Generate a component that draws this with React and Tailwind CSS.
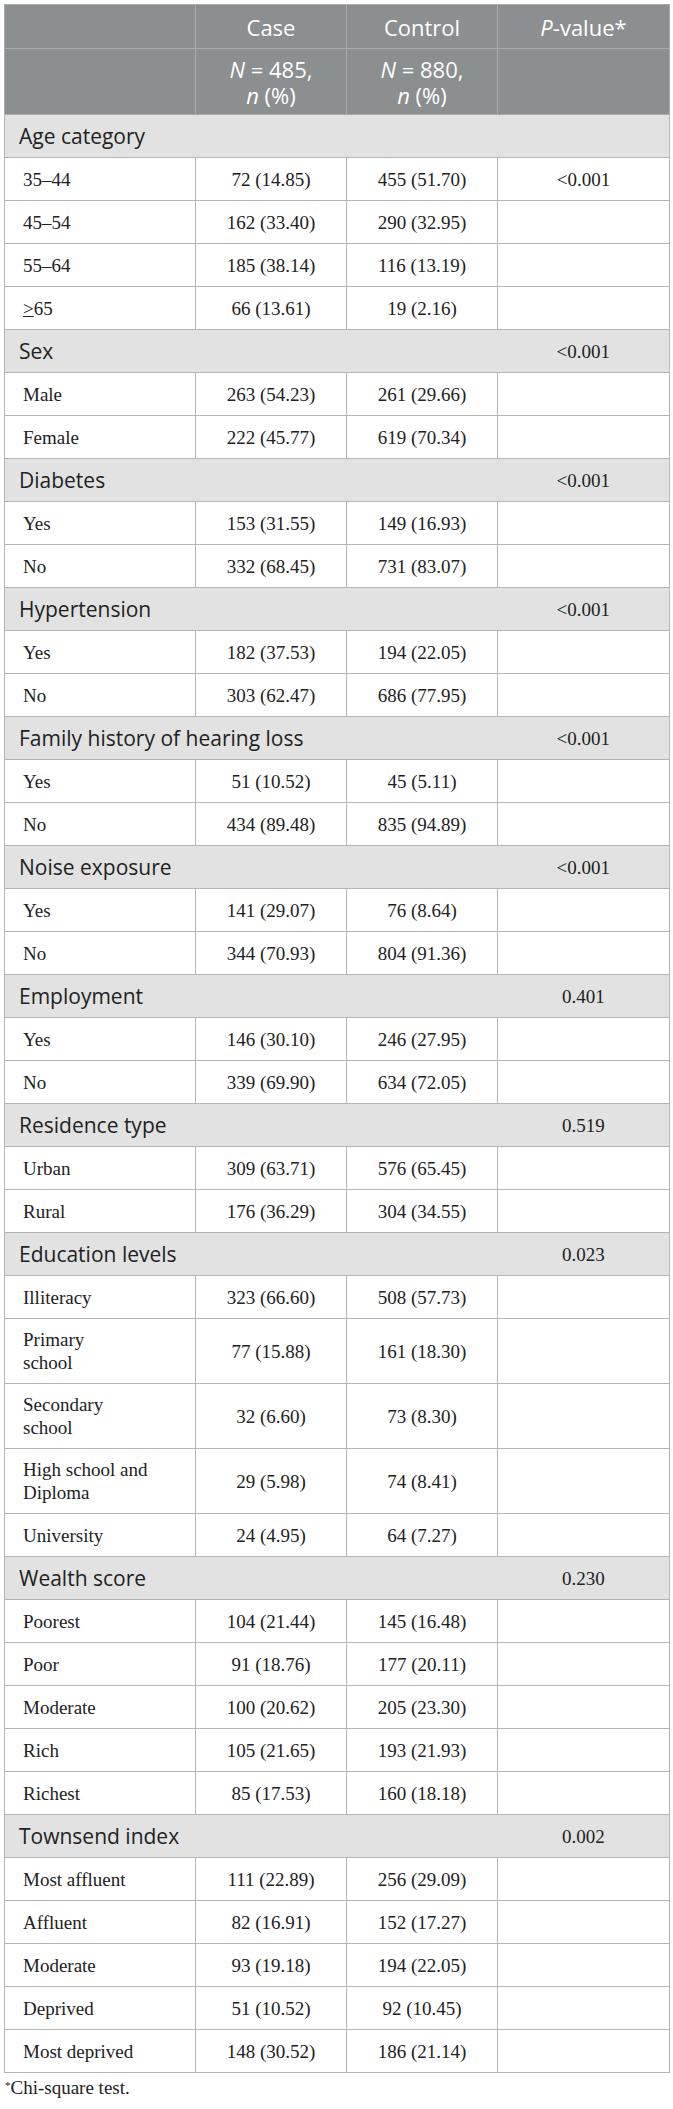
import React from 'react';

const SECTIONS = [
  {
    title: 'Age category',
    rows: [
      ['35–44', '72 (14.85)', '455 (51.70)', '<0.001'],
      ['45–54', '162 (33.40)', '290 (32.95)'],
      ['55–64', '185 (38.14)', '116 (13.19)'],
      [<><span className="underline">&gt;</span>65</>, '66 (13.61)', '19 (2.16)'],
    ],
  },
  { title: 'Sex', p: '<0.001', rows: [['Male', '263 (54.23)', '261 (29.66)'], ['Female', '222 (45.77)', '619 (70.34)']] },
  { title: 'Diabetes', p: '<0.001', rows: [['Yes', '153 (31.55)', '149 (16.93)'], ['No', '332 (68.45)', '731 (83.07)']] },
  { title: 'Hypertension', p: '<0.001', rows: [['Yes', '182 (37.53)', '194 (22.05)'], ['No', '303 (62.47)', '686 (77.95)']] },
  { title: 'Family history of hearing loss', p: '<0.001', rows: [['Yes', '51 (10.52)', '45 (5.11)'], ['No', '434 (89.48)', '835 (94.89)']] },
  { title: 'Noise exposure', p: '<0.001', rows: [['Yes', '141 (29.07)', '76 (8.64)'], ['No', '344 (70.93)', '804 (91.36)']] },
  { title: 'Employment', p: '0.401', rows: [['Yes', '146 (30.10)', '246 (27.95)'], ['No', '339 (69.90)', '634 (72.05)']] },
  { title: 'Residence type', p: '0.519', rows: [['Urban', '309 (63.71)', '576 (65.45)'], ['Rural', '176 (36.29)', '304 (34.55)']] },
  {
    title: 'Education levels',
    p: '0.023',
    tall: [1, 2, 3],
    rows: [
      ['Illiteracy', '323 (66.60)', '508 (57.73)'],
      [<>Primary<br />school</>, '77 (15.88)', '161 (18.30)'],
      [<>Secondary<br />school</>, '32 (6.60)', '73 (8.30)'],
      [<>High school and<br />Diploma</>, '29 (5.98)', '74 (8.41)'],
      ['University', '24 (4.95)', '64 (7.27)'],
    ],
  },
  {
    title: 'Wealth score',
    p: '0.230',
    rows: [
      ['Poorest', '104 (21.44)', '145 (16.48)'],
      ['Poor', '91 (18.76)', '177 (20.11)'],
      ['Moderate', '100 (20.62)', '205 (23.30)'],
      ['Rich', '105 (21.65)', '193 (21.93)'],
      ['Richest', '85 (17.53)', '160 (18.18)'],
    ],
  },
  {
    title: 'Townsend index',
    p: '0.002',
    rows: [
      ['Most affluent', '111 (22.89)', '256 (29.09)'],
      ['Affluent', '82 (16.91)', '152 (17.27)'],
      ['Moderate', '93 (19.18)', '194 (22.05)'],
      ['Deprived', '51 (10.52)', '92 (10.45)'],
      ['Most deprived', '148 (30.52)', '186 (21.14)'],
    ],
  },
];

const sans = "font-['Open_Sans','Lato',sans-serif]";
const serif = "font-['Liberation_Serif','Times_New_Roman',serif]";

export default function App() {
  return (
    <div className="bg-white min-h-[2109px] pt-[4px] pl-[4px]">
      <table className="border-collapse w-[665px] table-fixed">
        <colgroup>
          <col className="w-[191px]" />
          <col className="w-[151px]" />
          <col className="w-[151px]" />
          <col className="w-[172px]" />
        </colgroup>
        <thead className={`${sans} text-white text-[22px] leading-[26px] bg-[#8b8f90]`}>
          <tr className="h-[44px]">
            <th className="border border-[#a9acad]" />
            <th className="border border-[#a9acad] font-normal">Case</th>
            <th className="border border-[#a9acad] font-normal">Control</th>
            <th className="border border-[#a9acad] font-normal">
              <i>P</i>-value*
            </th>
          </tr>
          <tr className="h-[66px]">
            <th className="border border-[#a9acad]" />
            <th className="border border-[#a9acad] font-normal">
              <i>N</i> = 485,
              <br />
              <i>n</i> (%)
            </th>
            <th className="border border-[#a9acad] font-normal">
              <i>N</i> = 880,
              <br />
              <i>n</i> (%)
            </th>
            <th className="border border-[#a9acad]" />
          </tr>
        </thead>
        <tbody className={`${serif} text-[19px] leading-[23px] text-[#222]`}>
          {SECTIONS.map((s) => (
            <React.Fragment key={s.title}>
              <tr className="h-[43px] bg-[#e1e2e1]">
                <td colSpan={3} className={`${sans} text-[21px] leading-[26px] pl-[14px] border-y border-l border-[#b4b6b6]`}>
                  {s.title}
                </td>
                <td className="text-center border-y border-r border-[#b4b6b6]">{s.p}</td>
              </tr>
              {s.rows.map((r, i) => (
                <tr key={i} className={s.tall && s.tall.includes(i) ? 'h-[65px]' : 'h-[43px]'}>
                  <td className="pl-[18px] border border-[#b4b6b6]">{r[0]}</td>
                  <td className="text-center border border-[#b4b6b6]">{r[1]}</td>
                  <td className="text-center border border-[#b4b6b6]">{r[2]}</td>
                  <td className="text-center border border-[#b4b6b6]">{r[3]}</td>
                </tr>
              ))}
            </React.Fragment>
          ))}
        </tbody>
      </table>
      <p className={`${serif} text-[19px] leading-[23px] text-[#222] mt-[3px] pl-[1px]`}>
        <sup className="text-[11px]">*</sup>Chi-square test.
      </p>
    </div>
  );
}
